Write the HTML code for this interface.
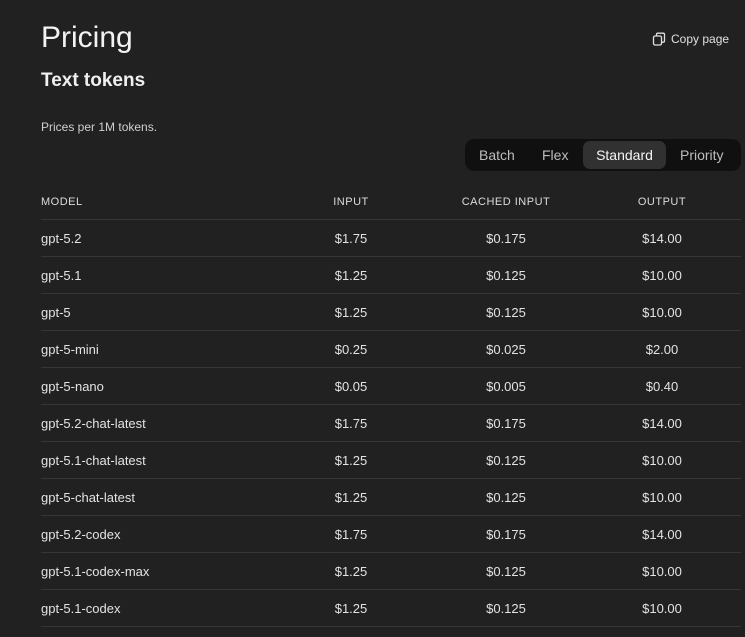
<!DOCTYPE html>
<html><head><style>
body{margin:0;width:745px;height:637px;overflow:hidden;background:#212121;color:#ececec;font-family:"Liberation Sans",sans-serif;position:relative}
.a{position:absolute}
h1{position:absolute;left:41px;top:21px;margin:0;font-size:30px;font-weight:500;color:#f3f3f3}
h2{position:absolute;left:41px;top:70px;margin:0;font-size:19px;font-weight:600;color:#f0f0f0}
.sub{left:41px;top:120px;font-size:12px;color:#d0d0d0}
.copy{left:652px;top:32px;font-size:12px;color:#e0e0e0;display:flex;align-items:center;gap:5px}
.tg{left:465px;top:139px;width:276px;height:32px;background:#101010;border-radius:9px}
.tg span{position:absolute;top:0;height:32px;line-height:32px;font-size:14px;color:#bdbdbd}
.tg .on{background:#313131;color:#f5f5f5;border-radius:7px;top:2px;height:28px;line-height:28px;text-align:center}
.row{position:absolute;left:41px;width:700px;height:36px;border-bottom:1px solid #363636;font-size:13px;color:#e3e3e3}
.row div{position:absolute;top:0;line-height:37px}
.c1{left:0}.c2{left:260px;width:100px;text-align:center}.c3{left:415px;width:100px;text-align:center}.c4{left:571px;width:100px;text-align:center}
.hd{font-size:11px;letter-spacing:.5px;color:#dcdcdc}
.hd div{line-height:38px}
</style></head><body>
<h1>Pricing</h1>
<div class="a copy"><svg width="14" height="14" viewBox="0 0 14 14" fill="none" stroke="#e0e0e0" stroke-width="1.3"><rect x="1.5" y="4" width="8" height="9" rx="1.5"/><path d="M4.5 4V2.5a1.3 1.3 0 0 1 1.3-1.3h5.4a1.3 1.3 0 0 1 1.3 1.3v6.4a1.3 1.3 0 0 1-1.3 1.3H9.5"/></svg>Copy page</div>
<h2>Text tokens</h2>
<div class="a sub">Prices per 1M tokens.</div>
<div class="a tg"><span style="left:14px">Batch</span><span style="left:77px">Flex</span><span class="on" style="left:118px;width:83px">Standard</span><span style="left:215px">Priority</span></div>
<div class="row hd" style="top:183px"><div class="c1">MODEL</div><div class="c2">INPUT</div><div class="c3">CACHED INPUT</div><div class="c4">OUTPUT</div></div>
<div class="row" style="top:220px"><div class="c1">gpt-5.2</div><div class="c2">$1.75</div><div class="c3">$0.175</div><div class="c4">$14.00</div></div>
<div class="row" style="top:257px"><div class="c1">gpt-5.1</div><div class="c2">$1.25</div><div class="c3">$0.125</div><div class="c4">$10.00</div></div>
<div class="row" style="top:294px"><div class="c1">gpt-5</div><div class="c2">$1.25</div><div class="c3">$0.125</div><div class="c4">$10.00</div></div>
<div class="row" style="top:331px"><div class="c1">gpt-5-mini</div><div class="c2">$0.25</div><div class="c3">$0.025</div><div class="c4">$2.00</div></div>
<div class="row" style="top:368px"><div class="c1">gpt-5-nano</div><div class="c2">$0.05</div><div class="c3">$0.005</div><div class="c4">$0.40</div></div>
<div class="row" style="top:405px"><div class="c1">gpt-5.2-chat-latest</div><div class="c2">$1.75</div><div class="c3">$0.175</div><div class="c4">$14.00</div></div>
<div class="row" style="top:442px"><div class="c1">gpt-5.1-chat-latest</div><div class="c2">$1.25</div><div class="c3">$0.125</div><div class="c4">$10.00</div></div>
<div class="row" style="top:479px"><div class="c1">gpt-5-chat-latest</div><div class="c2">$1.25</div><div class="c3">$0.125</div><div class="c4">$10.00</div></div>
<div class="row" style="top:516px"><div class="c1">gpt-5.2-codex</div><div class="c2">$1.75</div><div class="c3">$0.175</div><div class="c4">$14.00</div></div>
<div class="row" style="top:553px"><div class="c1">gpt-5.1-codex-max</div><div class="c2">$1.25</div><div class="c3">$0.125</div><div class="c4">$10.00</div></div>
<div class="row" style="top:590px"><div class="c1">gpt-5.1-codex</div><div class="c2">$1.25</div><div class="c3">$0.125</div><div class="c4">$10.00</div></div>
</body></html>
